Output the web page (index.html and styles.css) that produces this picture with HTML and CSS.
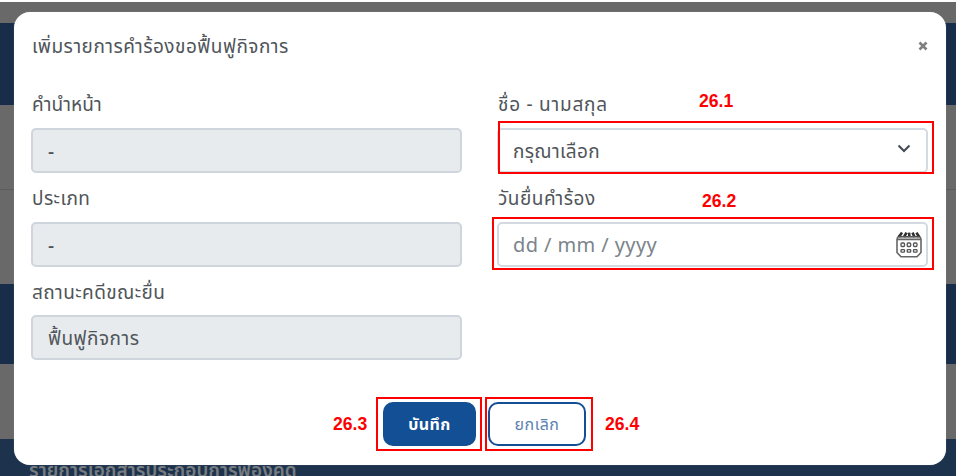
FILE: index.html
```html
<!DOCTYPE html>
<html lang="th">
<head>
<meta charset="utf-8">
<title>เพิ่มรายการคำร้องขอฟื้นฟูกิจการ</title>
<link rel="stylesheet" href="styles.css">
</head>
<body>
<div class="page">
  <div class="band band-top"></div>
  <div class="band band-blue"></div>
  <div class="band band-row"></div>
  <div class="band band-body"></div>
  <div class="band band-blue band-second"></div>
  <div class="band band-gap"></div>
  <div class="band band-section"><span class="t-section">รายการเอกสารประกอบการฟ้องคดี</span></div>
</div>
<div class="modal">
  <div class="modal-header">
    <span class="t-title">เพิ่มรายการคำร้องขอฟื้นฟูกิจการ</span>
    <svg class="close" viewBox="0 0 10 10"><path d="M1.5 1.5L8.5 8.5M8.5 1.5L1.5 8.5"/></svg>
  </div>
  <div class="form">
    <div class="field">
      <label><span class="t-prefix">คำนำหน้า</span></label>
      <div class="control disabled"><span class="dash">-</span></div>
    </div>
    <div class="field">
      <label><span class="t-name">ชื่อ - นามสกุล</span></label>
      <div class="control select"><span class="t-select">กรุณาเลือก</span>
        <svg class="chevron" viewBox="0 0 14 9"><path d="M1.5 1.5L7 7L12.5 1.5"/></svg>
      </div>
    </div>
    <div class="field">
      <label><span class="t-type">ประเภท</span></label>
      <div class="control disabled"><span class="dash">-</span></div>
    </div>
    <div class="field">
      <label><span class="t-date">วันยื่นคำร้อง</span></label>
      <div class="control date"><span class="placeholder">dd / mm / yyyy</span>
        <svg class="calendar" viewBox="0 0 28 28">
          <path class="outline" d="M2 7.5V21.5L6 25.8H22L26 21.5V7.5M2 8.4H26M2 7.5L4.5 4M26 7.5L23.5 4"/>
          <path class="rings" d="M4 6L7 1.6M9 6L11.5 1.6M14.5 6L14 1.6M19.5 6L17.5 1.6M24 6L21.5 1.6"/>
          <path class="rail" d="M4 5.8H24"/>
          <g class="days"><rect x="6" y="12" width="3.5" height="3.5" rx="1"/><rect x="12.2" y="12" width="3.5" height="3.5" rx="1"/><rect x="18.5" y="12" width="3.5" height="3.5" rx="1"/><rect x="6" y="18.6" width="3.5" height="2.6" rx=".6"/><rect x="12.2" y="18.6" width="3.5" height="2.6" rx=".6"/><rect x="18.5" y="18.6" width="3.5" height="2.6" rx=".6"/></g>
        </svg>
      </div>
    </div>
    <div class="field">
      <label><span class="t-status">สถานะคดีขณะยื่น</span></label>
      <div class="control disabled last"><span class="t-value">ฟื้นฟูกิจการ</span></div>
    </div>
  </div>
  <div class="actions">
    <button class="btn save"><span class="t-save">บันทึก</span></button>
    <button class="btn cancel"><span class="t-cancel">ยกเลิก</span></button>
  </div>
</div>
<div class="mark mark-1"></div><div class="num num-1">26.1</div>
<div class="mark mark-2"></div><div class="num num-2">26.2</div>
<div class="mark mark-3"></div><div class="num num-3">26.3</div>
<div class="mark mark-4"></div><div class="num num-4">26.4</div>
</body>
</html>
```
FILE: styles.css
```css
* { box-sizing: border-box; }
body {
  margin: 0;
  width: 956px;
  height: 476px;
  overflow: hidden;
  position: relative;
  background: #fff;
  color: #50555a;
  font: 19px/24px "Noto Sans", "Noto Sans Thai", sans-serif;
}
span { white-space: nowrap; }
.t-title { letter-spacing: .5px; padding-left: 1px; }
.t-prefix { letter-spacing: .1px; }
.t-name { letter-spacing: .75px; }
.t-select { letter-spacing: .35px; }
.t-type { letter-spacing: .4px; }
.t-date { letter-spacing: .5px; }
.t-status { letter-spacing: .4px; }
.t-value { letter-spacing: .5px; }
.t-save { letter-spacing: .4px; }
.t-cancel { letter-spacing: .5px; }
.dash { font-weight: 500; }
.page { padding-top: 2px; }
.band { background: #696969; }
.band-top { height: 21px; }
.band-blue { height: 82px; background: #182d49; }
.band-row { height: 85px; border-bottom: 1px solid #5c5c5c; }
.band-body { height: 94px; }
.band-second { height: 80px; }
.band-gap { height: 75px; }
.band-section {
  height: 37px;
  padding: 19px 0 0 29px;
  background: #1d324c;
  color: #777c80;
  font-weight: 600;
  line-height: 24px;
}
.modal {
  position: absolute;
  left: 14px;
  top: 12px;
  width: 932px;
  height: 453px;
  padding: 0 18px 0 17px;
  border-radius: 16px;
  background: #fff;
  box-shadow: 0 0 1px rgba(150, 160, 170, .8);
}
.modal-header {
  height: 68px;
  margin-bottom: 12px;
  display: flex;
  align-items: center;
  justify-content: space-between;
}
.close { width: 10px; height: 10px; stroke: #808080; stroke-width: 2.6; }
.form {
  display: grid;
  grid-template-columns: 431px 431px;
  column-gap: 35px;
  row-gap: 12px;
}
.field { height: 82px; }
label { display: flex; align-items: center; height: 24px; margin-bottom: 12px; padding-left: 1px; }
.control {
  height: 45px;
  display: flex;
  align-items: center;
  justify-content: space-between;
  border: 2px solid #d3dae1;
  border-radius: 5px;
  padding: 0 15px;
}
.disabled { background: #e7ebee; border-color: #cfd5dd; }
.last { margin-top: -13px; position: static; }
label:has(+ .last) { margin-bottom: 24px; }
.date { padding-right: 3px; }
.select { padding-left: 14px; }
.placeholder { color: #7b848b; font-size: 20px; letter-spacing: .4px; margin-left: -1px; }
.chevron { width: 14px; height: 9px; margin-bottom: 4px; fill: none; stroke: #434a50; stroke-width: 2; }
.calendar { width: 28px; height: 28px; fill: none; stroke: #666; stroke-width: 1.6; }
.rings { stroke: #303030; stroke-width: 2.6; }
.rail { stroke: #555; }
.days { stroke: #555; stroke-width: 1.3; }
.actions { display: flex; gap: 12px; padding: 40px 0 0 352px; }
.btn {
  display: flex;
  align-items: center;
  justify-content: center;
  height: 44px;
  padding: 0;
  border: 2px solid #124f95;
  border-radius: 10px;
  font: 16px/20px "Noto Sans", "Noto Sans Thai", sans-serif;
}
.save { width: 93px; background: #124f95; color: #fff; font-weight: 700; }
.cancel { width: 98px; background: #fff; color: #5a82b3; }
.mark { position: absolute; border: 2px solid #f00; }
.mark-1 { left: 498px; top: 121px; width: 436px; height: 53px; }
.mark-2 { left: 492px; top: 217px; width: 442px; height: 53px; }
.mark-3 { left: 376px; top: 397px; width: 106px; height: 54px; }
.mark-4 { left: 485px; top: 397px; width: 108px; height: 54px; }
.num { position: absolute; color: #f00; font: bold 17.6px/20px "Liberation Sans", sans-serif; }
.num-1 { left: 699px; top: 91px; }
.num-2 { left: 702px; top: 191px; }
.num-3 { left: 333px; top: 414px; }
.num-4 { left: 605px; top: 414px; }
```
